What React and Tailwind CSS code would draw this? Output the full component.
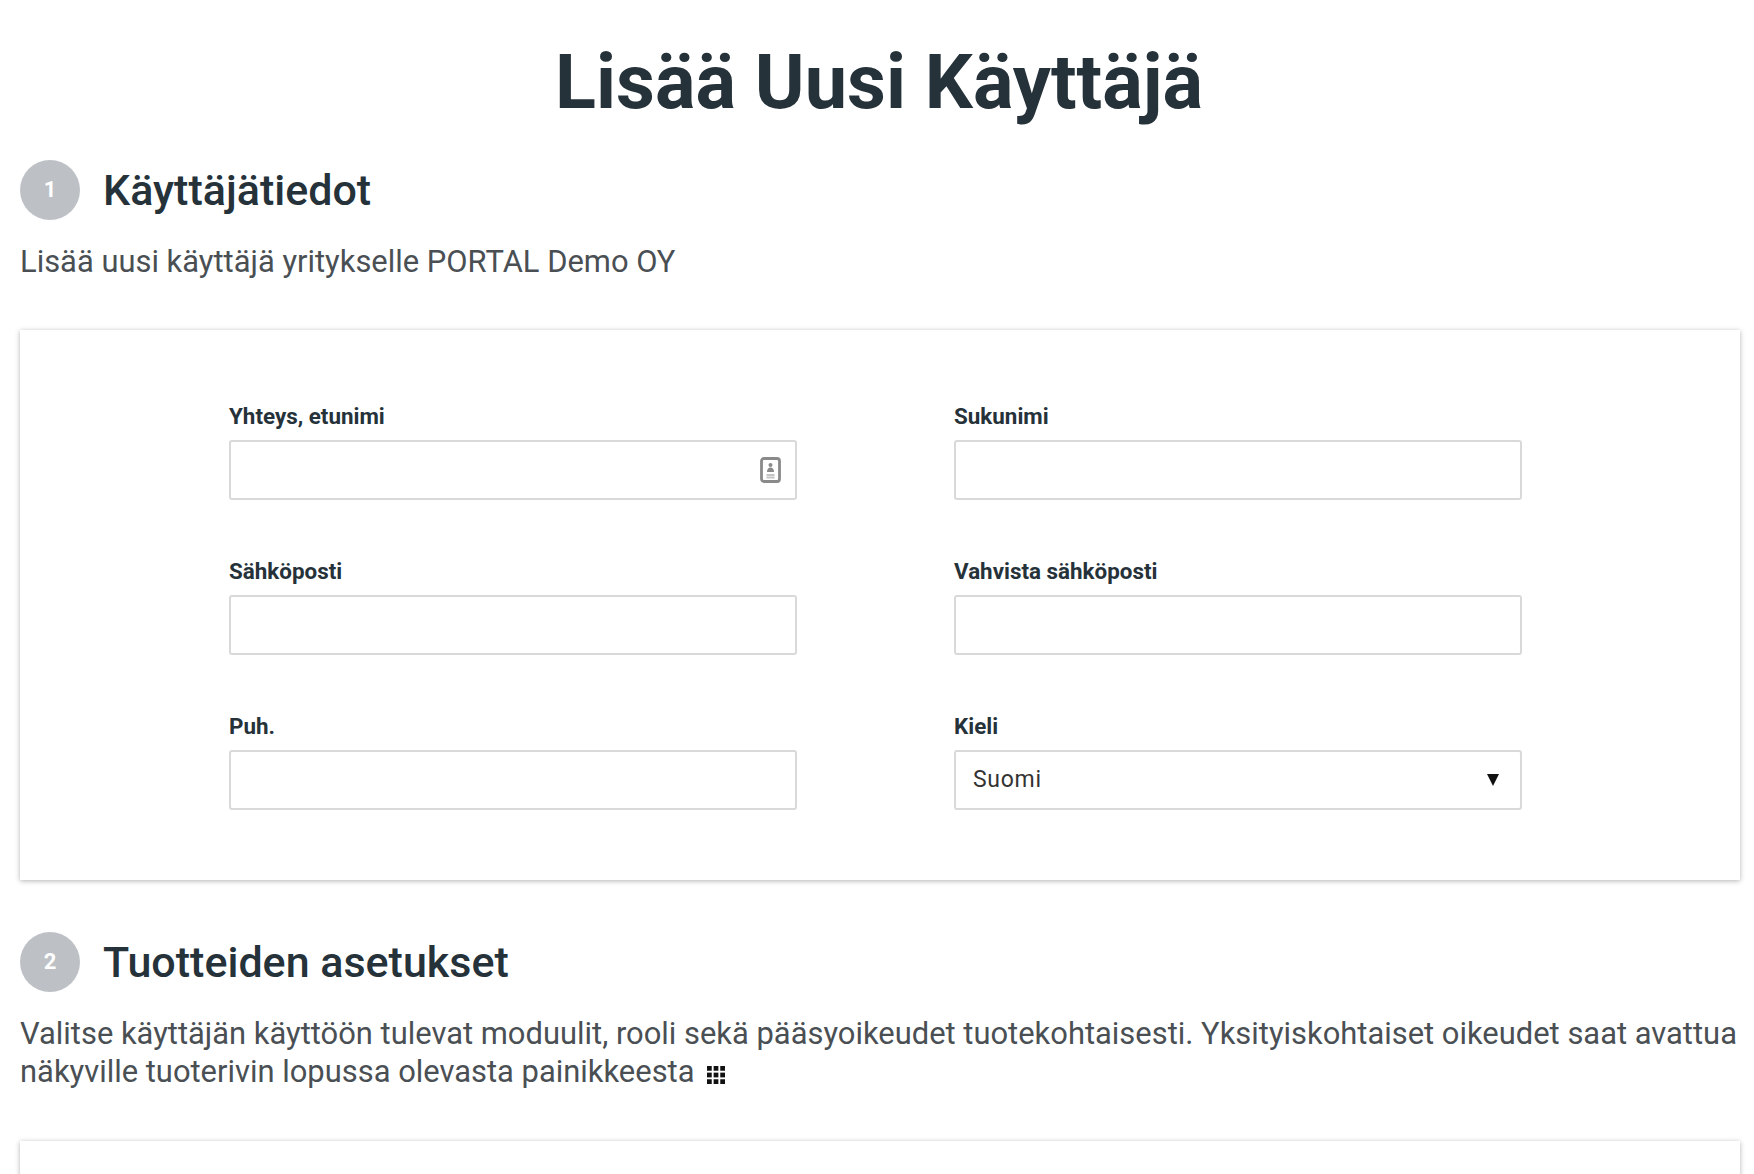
function Field({ label, children }) {
  return (
    <div>
      <label className="block h-[38px] text-[22.4px] leading-[28px] font-bold text-[#26323a]">{label}</label>
      {children}
    </div>
  );
}

function TextInput({ icon }) {
  return (
    <div className="relative">
      <input type="text" className="block h-[60px] w-full rounded-[3px] border-2 border-[#d9d9d9] bg-white px-4 text-[22px] outline-none" />
      {icon && <ContactIcon />}
    </div>
  );
}

function ContactIcon() {
  return (
    <svg className="absolute right-[16px] top-[17px] h-[26px] w-[21px]" viewBox="0 0 21 26" fill="none">
      <rect x="1.5" y="1.5" width="18" height="23" rx="2.5" stroke="#8a8a8a" strokeWidth="2.8" />
      <circle cx="10.5" cy="8" r="2" fill="#8a8a8a" />
      <path d="M7 15c0-3 1.5-4.5 3.5-4.5s3.5 1.500 3.500 4.500z" fill="#8a8a8a" />
      <path d="M6.500 18h8M6.500 20.500h8" stroke="#c4c4c4" strokeWidth="1.800" />
    </svg>
  );
}

function SectionHeader({ n, title }) {
  return (
    <div className="flex items-center gap-[23px]">
      <div className="flex h-[60px] w-[60px] items-center justify-center rounded-full bg-[#bdc1c6] pb-[1px] text-[22px] font-bold text-white">{n}</div>
      <h2 className="text-[43px] leading-[60px] font-medium text-[#26323a]">{title}</h2>
    </div>
  );
}

function GridIcon() {
  return (
    <svg className="ml-[12px] inline-block h-[18px] w-[18px] align-[-1.5px]" viewBox="0 0 19 19" fill="#111">
      <rect x="0" y="0" width="5" height="5" />
      <rect x="7" y="0" width="5" height="5" />
      <rect x="14" y="0" width="5" height="5" />
      <rect x="0" y="7" width="5" height="5" />
      <rect x="7" y="7" width="5" height="5" />
      <rect x="14" y="7" width="5" height="5" />
      <rect x="0" y="14" width="5" height="5" />
      <rect x="7" y="14" width="5" height="5" />
      <rect x="14" y="14" width="5" height="5" />
    </svg>
  );
}

export default function App() {
  return (
    <div className="h-[1174px] overflow-hidden bg-white px-[20px] font-['Roboto',sans-serif]">
      <h1 className="pl-[4px] pt-[40px] text-center text-[75.7px] leading-[84px] font-bold text-[#26323a]">Lisää Uusi Käyttäjä</h1>

      <div className="mt-[36px]">
        <SectionHeader n="1" title="Käyttäjätiedot" />
        <p className="mt-[23px] text-[30.92px] leading-[38px] text-[#4a4f54]">Lisää uusi käyttäjä yritykselle PORTAL Demo OY</p>
      </div>

      <div className="mt-[49px] h-[550px] w-[1720px] bg-white pl-[209px] pt-[72px] shadow-[0_1px_5px_rgba(0,0,0,0.3)]">
        <div className="grid grid-cols-[568px_568px] gap-x-[157px] gap-y-[57px]">
          <Field label="Yhteys, etunimi"><TextInput icon /></Field>
          <Field label="Sukunimi"><TextInput /></Field>
          <Field label="Sähköposti"><TextInput /></Field>
          <Field label="Vahvista sähköposti"><TextInput /></Field>
          <Field label="Puh."><TextInput /></Field>
          <Field label="Kieli">
            <div className="relative">
              <select defaultValue="Suomi" className="block h-[60px] w-full appearance-none rounded-[3px] border-2 border-[#d9d9d9] bg-white px-[17px] text-[23px] tracking-[0.7px] text-[#333] outline-none">
                <option>Suomi</option>
              </select>
              <svg className="pointer-events-none absolute right-[23px] top-[24px] h-[12px] w-[12px]" viewBox="0 0 12 12" fill="#111">
                <path d="M0 0h12L6 12z" />
              </svg>
            </div>
          </Field>
        </div>
      </div>

      <div className="mt-[52px]">
        <SectionHeader n="2" title="Tuotteiden asetukset" />
        <p className="mt-[23px] w-[1724px] text-[30.92px] leading-[38px] text-[#4a4f54]">
          Valitse käyttäjän käyttöön tulevat moduulit, rooli sekä pääsyoikeudet tuotekohtaisesti. Yksityiskohtaiset oikeudet saat avattua näkyville tuoterivin lopussa olevasta painikkeesta
          <GridIcon />
        </p>
      </div>

      <div className="mt-[50px] h-[200px] w-[1720px] bg-white shadow-[0_1px_5px_rgba(0,0,0,0.3)]"></div>
    </div>
  );
}
